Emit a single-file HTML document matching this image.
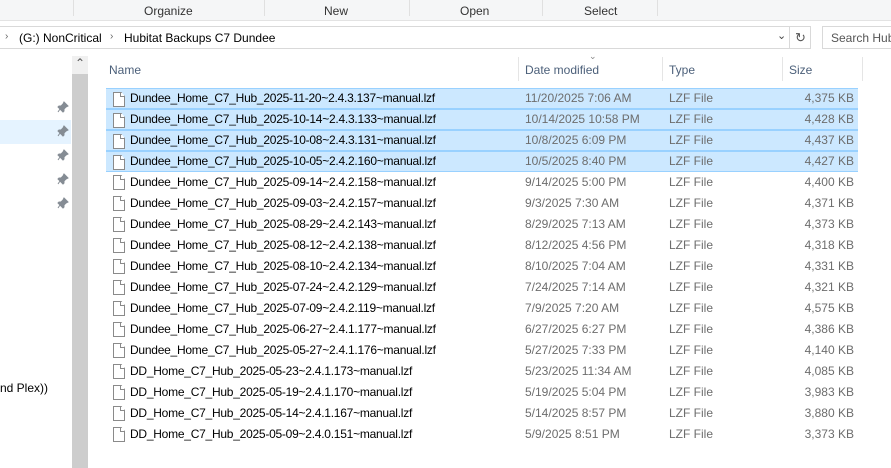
<!DOCTYPE html>
<html><head><style>
*{margin:0;padding:0;box-sizing:border-box}
body{width:891px;height:468px;overflow:hidden;background:#fff;font-family:"Liberation Sans",sans-serif;font-size:12px;color:#000;position:relative}
.a{position:absolute;white-space:nowrap}
.tb{position:absolute;left:0;top:0;width:891px;height:21px;background:#f5f6f7;border-bottom:1px solid #e3e3e3}
.tb span{position:absolute;top:4px;color:#333}
.vs{position:absolute;top:0;width:1px;height:16px;background:#e0e0e0}
.row{position:absolute;left:106px;width:752px;height:21px}
.row.sel{background:#cce8ff;border-top:1px solid #99d1ff;border-bottom:1px solid #99d1ff}
.row span{position:absolute;top:3px}
.nm{letter-spacing:-0.25px}
.ic{position:absolute;left:7px;top:3px;width:12px;height:15px;border:1px solid #8a8a8a;background:#fff;clip-path:polygon(0 0,70% 0,100% 28%,100% 100%,0 100%)}
.ic:after{content:"";position:absolute;right:-1px;top:-1px;width:4px;height:4px;border-left:1px solid #8a8a8a;border-bottom:1px solid #8a8a8a}
.hs{position:absolute;top:57px;width:1px;height:24px;background:#e5e5e5}
.pin{position:absolute;left:57px;width:12px;height:12px}
</style></head><body>
<div class="tb">
<div class="vs" style="left:73px"></div><div class="vs" style="left:264px"></div><div class="vs" style="left:409px"></div><div class="vs" style="left:542px"></div><div class="vs" style="left:657px"></div>
<span style="left:144px">Organize</span><span style="left:324px">New</span><span style="left:460px">Open</span><span style="left:584px">Select</span>
</div>
<div class="a" style="left:0;top:26px;width:811px;height:23px;border:1px solid #d9d9d9;border-left:none"></div>
<div class="a" style="left:5px;top:31px;color:#666;font-size:10px">›</div>
<div class="a" style="left:19px;top:31px">(G:) NonCritical</div>
<div class="a" style="left:110px;top:31px;color:#666;font-size:10px">›</div>
<div class="a" style="left:124px;top:31px">Hubitat Backups C7 Dundee</div>
<div class="a" style="left:777px;top:29px;color:#444;font-size:11px">⌄</div>
<div class="a" style="left:789px;top:27px;width:1px;height:21px;background:#d9d9d9"></div>
<div class="a" style="left:795px;top:30px;color:#555;font-size:13px">↻</div>
<div class="a" style="left:822px;top:26px;width:80px;height:23px;border:1px solid #d9d9d9"></div>
<div class="a" style="left:831px;top:31px;color:#555">Search Hub</div>
<div class="a" style="left:72px;top:56px;width:16px;height:412px;background:#cdcdcd"></div>
<div class="a" style="left:72px;top:56px;width:16px;height:18px;background:#f0f0f0"></div>
<div class="a" style="left:75px;top:56px;color:#555;font-size:12px">⌃</div>
<div class="a" style="left:0;top:120px;width:71px;height:24px;background:#e5f3ff"></div>
<svg class="pin" style="top:101px" viewBox="0 0 12 12"><path d="M7 1l4 4-2 1-2 2 0 2-1 1-5-5 1-1 2 0 2-2z M3 8l-2 3" fill="#858c94" stroke="#858c94" stroke-width="1"/></svg>
<svg class="pin" style="top:125px" viewBox="0 0 12 12"><path d="M7 1l4 4-2 1-2 2 0 2-1 1-5-5 1-1 2 0 2-2z M3 8l-2 3" fill="#858c94" stroke="#858c94" stroke-width="1"/></svg>
<svg class="pin" style="top:149px" viewBox="0 0 12 12"><path d="M7 1l4 4-2 1-2 2 0 2-1 1-5-5 1-1 2 0 2-2z M3 8l-2 3" fill="#858c94" stroke="#858c94" stroke-width="1"/></svg>
<svg class="pin" style="top:173px" viewBox="0 0 12 12"><path d="M7 1l4 4-2 1-2 2 0 2-1 1-5-5 1-1 2 0 2-2z M3 8l-2 3" fill="#858c94" stroke="#858c94" stroke-width="1"/></svg>
<svg class="pin" style="top:197px" viewBox="0 0 12 12"><path d="M7 1l4 4-2 1-2 2 0 2-1 1-5-5 1-1 2 0 2-2z M3 8l-2 3" fill="#858c94" stroke="#858c94" stroke-width="1"/></svg>
<div class="a" style="left:0;top:381px">nd Plex))</div>
<div class="a" style="left:109px;top:63px;color:#4c607a">Name</div>
<div class="a" style="left:525px;top:63px;color:#4c607a">Date modified</div>
<div class="a" style="left:589px;top:51px;color:#888;font-size:9px">⌄</div>
<div class="a" style="left:669px;top:63px;color:#4c607a">Type</div>
<div class="a" style="left:789px;top:63px;color:#4c607a">Size</div>
<div class="hs" style="left:518px"></div><div class="hs" style="left:662px"></div><div class="hs" style="left:782px"></div><div class="hs" style="left:862px"></div>
<div id="rows"></div>
<script>
var d=[["Dundee_Home_C7_Hub_2025-11-20~2.4.3.137~manual.lzf","11/20/2025 7:06 AM","4,375 KB"],
["Dundee_Home_C7_Hub_2025-10-14~2.4.3.133~manual.lzf","10/14/2025 10:58 PM","4,428 KB"],
["Dundee_Home_C7_Hub_2025-10-08~2.4.3.131~manual.lzf","10/8/2025 6:09 PM","4,437 KB"],
["Dundee_Home_C7_Hub_2025-10-05~2.4.2.160~manual.lzf","10/5/2025 8:40 PM","4,427 KB"],
["Dundee_Home_C7_Hub_2025-09-14~2.4.2.158~manual.lzf","9/14/2025 5:00 PM","4,400 KB"],
["Dundee_Home_C7_Hub_2025-09-03~2.4.2.157~manual.lzf","9/3/2025 7:30 AM","4,371 KB"],
["Dundee_Home_C7_Hub_2025-08-29~2.4.2.143~manual.lzf","8/29/2025 7:13 AM","4,373 KB"],
["Dundee_Home_C7_Hub_2025-08-12~2.4.2.138~manual.lzf","8/12/2025 4:56 PM","4,318 KB"],
["Dundee_Home_C7_Hub_2025-08-10~2.4.2.134~manual.lzf","8/10/2025 7:04 AM","4,331 KB"],
["Dundee_Home_C7_Hub_2025-07-24~2.4.2.129~manual.lzf","7/24/2025 7:14 AM","4,321 KB"],
["Dundee_Home_C7_Hub_2025-07-09~2.4.2.119~manual.lzf","7/9/2025 7:20 AM","4,575 KB"],
["Dundee_Home_C7_Hub_2025-06-27~2.4.1.177~manual.lzf","6/27/2025 6:27 PM","4,386 KB"],
["Dundee_Home_C7_Hub_2025-05-27~2.4.1.176~manual.lzf","5/27/2025 7:33 PM","4,140 KB"],
["DD_Home_C7_Hub_2025-05-23~2.4.1.173~manual.lzf","5/23/2025 11:34 AM","4,085 KB"],
["DD_Home_C7_Hub_2025-05-19~2.4.1.170~manual.lzf","5/19/2025 5:04 PM","3,983 KB"],
["DD_Home_C7_Hub_2025-05-14~2.4.1.167~manual.lzf","5/14/2025 8:57 PM","3,880 KB"],
["DD_Home_C7_Hub_2025-05-09~2.4.0.151~manual.lzf","5/9/2025 8:51 PM","3,373 KB"]];
var h="";
d.forEach(function(r,i){var t=88+i*21;var tp=(i<4?2:3);
h+='<div class="row'+(i<4?' sel':'')+'" style="top:'+t+'px"><div class="ic"></div><span class="nm" style="left:24px;top:'+tp+'px">'+r[0]+'</span><span style="left:419px;color:#6d6d6d;top:'+tp+'px">'+r[1]+'</span><span style="left:563px;color:#6d6d6d;top:'+tp+'px">LZF File</span><span style="right:4px;color:#6d6d6d;top:'+tp+'px">'+r[2]+'</span></div>';});
document.getElementById("rows").innerHTML=h;
</script>
</body></html>
